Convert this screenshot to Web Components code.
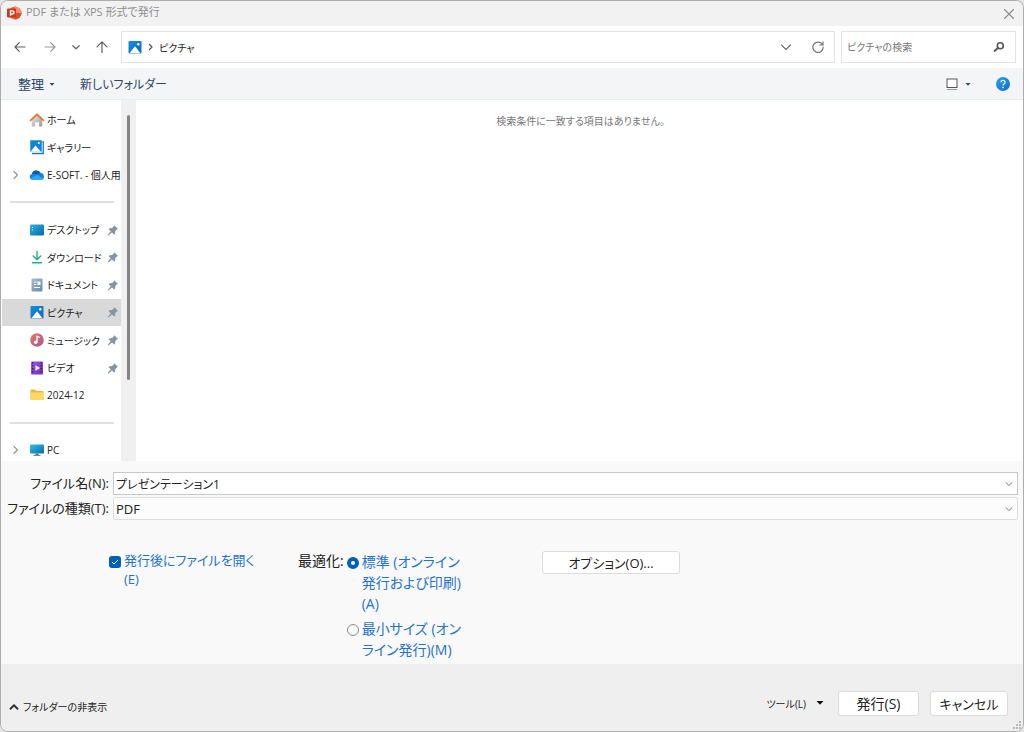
<!DOCTYPE html>
<html lang="ja">
<head>
<meta charset="utf-8">
<title>PDF または XPS 形式で発行</title>
<style>
html, body { height: 100%; margin: 0; }
body { background: #e4e4e4; font-family: "Open Sans", "Noto Sans CJK JP", sans-serif; font-feature-settings: "palt"; color: #222; }
</style>
</head>
<body>
<publish-dialog></publish-dialog>
<script>
const BASE = `<style>
*{box-sizing:border-box}
button,input,select{font:inherit;font-feature-settings:inherit;color:inherit;margin:0}
button{border:0;background:none;padding:0;cursor:default;display:flex;align-items:center;justify-content:center;white-space:nowrap}
</style>`;
function define(name, html, setup) {
  customElements.define(name, class extends HTMLElement {
    connectedCallback() {
      if (this.shadowRoot) return;
      const t = document.createElement('template');
      t.innerHTML = BASE + (typeof html === 'function' ? html(this) : html);
      this.attachShadow({ mode: 'open' }).append(t.content.cloneNode(true));
      if (setup) setup(this);
    }
  });
}
const line = (d, c = '#666', w = 1.2) => `<path d="${d}" fill="none" stroke="${c}" stroke-width="${w}" stroke-linecap="round" stroke-linejoin="round"/>`;
const grad = (id, a, b) => `<defs><linearGradient id="${id}" x1="0" y1="0" x2="1" y2="1"><stop stop-color="${a}"/><stop offset="1" stop-color="${b}"/></linearGradient></defs>`;
const ICONS = {
  ppt: '<circle cx="8" cy="7" r="6.500" fill="#ed6c47"/><path d="M8 .5a6.500 6.500 0 0 1 6.500 6.500H8z" fill="#ff8f6b"/><path d="M8 13.500A6.500 6.500 0 0 0 14.500 7H8z" fill="#d35230"/><rect x="0" y="2.500" width="9" height="9" rx="1" fill="#c43e1c"/><path d="M3.500 9.800V4.800h1.900a1.600 1.600 0 0 1 0 3.200H3.500" fill="none" stroke="#fff" stroke-width="1.300"/>',
  close: line('M3.500 3.500l9 9M12.500 3.500l-9 9', '#8a8a8a', 1.1),
  back: line('M13 8H3M7.300 3.700L3 8l4.300 4.300', '#606060'),
  forward: line('M3 8h10M8.700 3.700L13 8l-4.300 4.300', '#9a9a9a'),
  up: line('M8 13.500V3M3 7.800L8 2.800l5 5', '#606060'),
  chevron: line('M4.800 6.700L8 9.800l3.200-3.100', '#666', 1.3),
  wide: line('M3.500 6L8 10.500 12.500 6', '#777'),
  small: line('M5 6.700L8 9.500l3-2.800', '#777', 1),
  crumb: line('M6.500 5.500L9 8l-2.500 2.500', '#555', 1.3),
  expand: line('M6 4.500L9.500 8 6 11.500', '#999', 1.3),
  fold: line('M4.500 9.700L8 6.300l3.500 3.400', '#333', 2),
  refresh: line('M12.700 6A5.200 5.200 0 1 0 13.200 8M13 2.800V6H9.800', '#777', 1.2),
  search: '<circle cx="9.300" cy="6.700" r="3" fill="none" stroke="#555" stroke-width="1.600"/>' + line('M7 9L3.500 12', '#555', 1.8),
  triangle: '<path d="M5.500 7h5L8 9.800z" fill="currentColor"/>',
  bigtri: '<path d="M4.500 6h7L8 9.800z" fill="#111"/>',
  view: '<rect x="3" y="3" width="10" height="8.500" fill="#fff" stroke="#555"/><path d="M3 13.500h10" stroke="#999"/>',
  help: grad('g', '#2ba0e8', '#0b6fd0') + '<circle cx="8" cy="8" r="7" fill="url(#g)"/><path d="M5.900 6.300a2.100 2 0 1 1 3 1.800c-.7.400-.9.700-.9 1.500" fill="none" stroke="#fff" stroke-width="1.200"/><circle cx="8" cy="11.600" r=".8" fill="#fff"/>',
  home: grad('g', '#e8e8e8', '#9b9b9b') + '<path d="M2.800 7.500L8 3l5.200 4.500V14.500H9.900v-4.300H6.100v4.300H2.800z" fill="url(#g)"/>' + line('M1.600 8.300L8 2.300l6.400 6', '#e8742c', 1.8),
  gallery: '<path d="M4 3h10.200v11.500H3" fill="none" stroke="#1875c6" stroke-width="1.400"/><rect x="1" y="1" width="12" height="12" fill="#1284d8" stroke="#fff" stroke-width=".5"/><path d="M1.500 12.800L6.500 6.500l5.500 6.300z" fill="#fff"/><circle cx="9.800" cy="4" r="1.100" fill="#fff"/>',
  cloud: '<path d="M3.500 12.800a3 3 0 0 1-.6-5.900A4.700 4.700 0 0 1 11.600 6a3.500 3.500 0 0 1 1 6.800z" fill="#1684dc"/><path d="M2.900 6.900A4.700 4.700 0 0 1 11.600 6c-2 .1-2.600 1.200-3.600 1.700-1.600-1-3.300-1.200-5.100-.8z" fill="#0f5cad"/><path d="M8 7.700l6.500 4.100c-.5.600-1.100 1-1.900 1h-9.100c-1 0-1.900-.6-2.400-1.400z" fill="#2da8ef"/>',
  desktop: grad('g', '#29b5dc', '#0b69a8') + '<rect x="1" y="2.500" width="14" height="11" rx="1" fill="url(#g)"/><path d="M3 5.500h1M3 8h1" stroke="#d6f6ff"/>',
  download: line('M8 2.500v8M4.300 7L8 10.700 11.700 7M3.500 13.700h9', '#23b08b', 1.4),
  document: grad('g', '#a5bdd5', '#6689ad') + '<rect x="2.500" y="1.500" width="11" height="13" rx="1" fill="url(#g)"/><path d="M5 5h2.500M5 7.500h2.500M5 10.500h6" stroke="#fff"/><rect x="8.500" y="4.500" width="3" height="3.500" fill="#fff"/>',
  picture: grad('g', '#0d91df', '#1268ba') + '<rect x="1.500" y="2" width="13" height="12.500" rx="1" fill="url(#g)"/><path d="M2.500 14.300L7.600 7.700q.4-.4.800 0l5.100 6.600z" fill="#fff"/><circle cx="11.300" cy="5.300" r="1.200" fill="#fff"/>',
  music: grad('g', '#e8745b', '#a45c94') + '<circle cx="8" cy="8" r="6.800" fill="url(#g)"/><path d="M8 10V4.200l3 1.300" fill="none" stroke="#fff" stroke-width="1.300"/><circle cx="6.700" cy="10.300" r="1.800" fill="#fff"/>',
  video: grad('g', '#9857ea', '#6f2fc4') + '<rect x="2" y="1.500" width="12" height="13" rx="1" fill="url(#g)"/><path d="M3.800 2v12M12.200 2v12" stroke="#3b177a" stroke-width="1.300" stroke-dasharray="1.500 1.500"/><path d="M6.500 5.200v5.600L11 8z" fill="#fff"/>',
  folder: '<path d="M1.500 3.500q0-1 1-1H6l1.500 1.500h6q1 0 1 1V12q0 1-1 1h-11q-1 0-1-1z" fill="#f2b632"/><path d="M1.500 5.500h13V12q0 1-1 1h-11q-1 0-1-1z" fill="#ffd867"/>',
  pc: grad('g', '#2fc2e4', '#1169a5') + '<rect x="1" y="2.500" width="14" height="9" rx=".8" fill="url(#g)"/><path d="M6.500 11.500h3l.5 2H6z" fill="#3b85b0"/><path d="M4.500 13.500h7" stroke="#6c8ba0"/>',
  pin: '<path d="M9.300 3.200L13 6.900l-1.200.6-1.500 1.600-.2 2.600-1 .9L7 10.500l-3.300 2.800-.9.200.2-.9L5.800 9.300 3.600 7.200l1-1 2.500-.3 1.600-1.500z" fill="#87939e"/>',
  grip: '<path d="M12 6h2v2h-2zM9 9h2v2H9zM12 9h2v2h-2zM6 12h2v2H6zM9 12h2v2H9zM12 12h2v2h-2z" fill="#b8b8b8"/>'
};
define('ui-icon', el => `<style>:host{display:block;flex:none;width:16px;height:16px}svg{display:block;width:100%;height:100%}</style>
<svg viewBox="0 0 16 16" aria-hidden="true">${ICONS[el.getAttribute('name')]}</svg>`);

define('title-bar', `<style>
:host{display:flex;align-items:center;height:25px;padding:0 6px;background:#f2f2f2;color:#8f8f8f;font-size:11px;flex:none}
h1{font:inherit;margin:0 auto 0 3px;white-space:nowrap;line-height:22px;align-self:flex-start}
</style><ui-icon name="ppt"></ui-icon><h1><slot></slot></h1><button aria-label="閉じる"><ui-icon name="close"></ui-icon></button>`);

define('address-bar', `<style>
:host{display:flex;align-items:center;height:42px;padding:0 7px 0 11px;background:#fff;flex:none;font-size:10px}
nav{display:flex;gap:10px;margin-right:11px}
.forward{margin-left:4px}
.box{display:flex;align-items:center;height:32px;border:1px solid #e3e3e3;background:#fff}
.path{flex:1;padding:0 8px 0 5px;margin-right:6px}
.path span{margin-right:auto}
.path button:last-child{margin-left:16px}
.find{width:175px;padding:0 8px 0 5px}
input{flex:1;min-width:0;border:0;outline:0;padding:0;background:none}
input::placeholder{color:#777;opacity:1}
</style>
<nav aria-label="移動"><button aria-label="戻る"><ui-icon name="back"></ui-icon></button><button class="forward" aria-label="進む"><ui-icon name="forward"></ui-icon></button><button aria-label="履歴"><ui-icon name="chevron"></ui-icon></button><button aria-label="上へ"><ui-icon name="up"></ui-icon></button></nav>
<div class="box path"><ui-icon name="picture"></ui-icon><ui-icon name="crumb"></ui-icon><span>ピクチャ</span><button aria-label="以前の場所"><ui-icon name="wide"></ui-icon></button><button aria-label="更新"><ui-icon name="refresh"></ui-icon></button></div>
<div class="box find"><input type="search" placeholder="ピクチャの検索" aria-label="ピクチャの検索"><button aria-label="検索"><ui-icon name="search"></ui-icon></button></div>`);

define('command-bar', `<style>
:host{display:flex;align-items:center;height:32px;padding:0 12px 0 17px;background:#f4f5f7;border-bottom:1px solid #ebecee;color:#2c4569;font-size:13px;flex:none}
.new{margin:0 auto 0 20px;font-size:12px}
.view{margin-right:19px}
</style>
<button>整理<ui-icon name="triangle"></ui-icon></button><button class="new">新しいフォルダー</button>
<button class="view" aria-label="表示"><ui-icon name="view"></ui-icon><ui-icon name="triangle"></ui-icon></button><button aria-label="ヘルプ"><ui-icon name="help"></ui-icon></button>`);

define('nav-item', el => `<style>
:host{display:flex;flex:1;min-height:0;margin-left:1px}
a{display:flex;flex:1;min-width:0;align-items:center;padding-left:6px;color:inherit;text-decoration:none;white-space:nowrap;overflow:hidden}
:host([selected]) a{background:#d9d9d9}
.exp{width:16px;margin-right:5px}
.text{flex:1;min-width:0;overflow:hidden;margin-left:2px}
</style>
<a href="#"><span class="exp">${el.hasAttribute('expandable') ? '<ui-icon name="expand"></ui-icon>' : ''}</span><ui-icon name="${el.getAttribute('icon')}"></ui-icon><span class="text"><slot></slot></span>${el.hasAttribute('pinned') ? '<ui-icon name="pin"></ui-icon>' : ''}</a>`);

define('nav-pane', `<style>
:host{display:flex;width:135px;flex:none;background:#fff;overflow:hidden;font-size:10px}
nav{display:flex;flex-direction:column;flex:1;min-width:0;margin:6px 0 -3px}
.sep{flex:1;display:flex;align-items:center;padding:0 7px 0 9px}
hr{flex:1;border:0;border-top:2px solid #e0e0e0;margin:0}
.track{width:15px;background:#f0f0f0;padding:15px 6px 81px 6px;display:flex}
.thumb{flex:1;background:#858585;border-radius:2px}
</style>
<nav aria-label="フォルダー">
<nav-item icon="home">ホーム</nav-item><nav-item icon="gallery">ギャラリー</nav-item><nav-item icon="cloud" expandable>E-SOFT. - 個人用</nav-item>
<div class="sep"><hr></div>
<nav-item icon="desktop" pinned>デスクトップ</nav-item><nav-item icon="download" pinned>ダウンロード</nav-item><nav-item icon="document" pinned>ドキュメント</nav-item><nav-item icon="picture" pinned selected>ピクチャ</nav-item><nav-item icon="music" pinned>ミュージック</nav-item><nav-item icon="video" pinned>ビデオ</nav-item><nav-item icon="folder">2024-12</nav-item>
<div class="sep"><hr></div>
<nav-item icon="pc" expandable>PC</nav-item>
</nav><div class="track"><div class="thumb"></div></div>`);

define('file-list', `<style>
:host{display:block;flex:1;background:#fff;padding:12px 0 0 2px;text-align:center;font-size:10px;line-height:18px;color:#777}
p{margin:0}</style><p><slot></slot></p>`);

define('file-fields', `<style>
:host{display:grid;grid-template-columns:108px 1fr;column-gap:4px;row-gap:2px;padding:11px 5px 0 0;font-size:13px}
label{text-align:right;line-height:23px;white-space:nowrap}
.field{display:grid;grid-template-columns:1fr 16px;align-items:center;height:23px;background:#fff;border:1px solid #c8c8c8}
.type{background:#fcfcfc;border-color:#dedede;border-radius:2px}
input,select{grid-area:1/1/2/3;width:100%;height:21px;border:0;padding:0 16px 0 2px;background:none;outline:0;appearance:none;line-height:20px}
input{font-size:12px}
ui-icon{grid-area:1/2/2/3;pointer-events:none}
</style>
<label for="name">ファイル名(N):</label><div class="field"><input id="name" value="プレゼンテーション1"><ui-icon name="small"></ui-icon></div>
<label for="type">ファイルの種類(T):</label><div class="field type"><select id="type"><option>PDF</option></select><ui-icon name="small"></ui-icon></div>`);

define('choice-box', el => {
  const type = el.getAttribute('type');
  return `<style>
:host{display:block;color:#1f72cf}
label{display:flex;align-items:flex-start;gap:3px;white-space:nowrap}
input{appearance:none;flex:none;width:12px;height:12px;margin:5px 0 0;border:1px solid #8c8c8c;background:#fafafa}
input[type=radio]{border-radius:50%;margin-top:6px}
input[type=radio]:checked{border:4px solid #005fb8;background:#fff}
input[type=checkbox]{border-radius:3px}
input[type=checkbox]:checked{border:0;background:#005fb8 url("data:image/svg+xml,%3Csvg xmlns='http://www.w3.org/2000/svg' viewBox='0 0 12 12'%3E%3Cpath d='M3 6l2 2 4-4' fill='none' stroke='white'/%3E%3C/svg%3E")}
</style><label><input type="${type}" ${el.hasAttribute('checked') ? 'checked' : ''}><span><slot></slot></span></label>`;
});

define('publish-options', `<style>
:host{display:grid;grid-template-columns:189px 244px 138px;align-items:start;padding:31px 0 0 108px;font-size:13px}
.open{line-height:19px}
.opt{display:flex;gap:3px;font-size:14px;line-height:21px;white-space:nowrap;margin-top:-1px}
.list{display:flex;flex-direction:column;gap:4px;margin-top:1px}
button{height:23px;background:#fff;border:1px solid #dcdcdc;border-radius:3px}
</style>
<choice-box class="open" type="checkbox" checked>発行後にファイルを開く<br>(E)</choice-box>
<div class="opt" role="radiogroup" aria-labelledby="opt"><span id="opt">最適化:</span><div class="list"><choice-box type="radio" checked>標準 (オンライン<br>発行および印刷)<br>(A)</choice-box><choice-box type="radio">最小サイズ (オン<br>ライン発行)(M)</choice-box></div></div>
<button>オプション(O)...</button>`, el => {
  const boxes = [...el.shadowRoot.querySelectorAll('choice-box[type=radio]')];
  boxes.forEach(b => b.addEventListener('click', () => boxes.forEach(o => {
    o.shadowRoot.querySelector('input').checked = o === b;
  })));
});

define('dialog-footer', `<style>
:host{display:flex;align-items:center;height:67px;background:#efefef;padding:11px 15px 0 5px;font-size:10px;position:relative;flex:none}
.fold{margin:7px auto 0 0;gap:1px}
.tools{gap:6px;margin-right:10px}
.main{height:25px;width:81px;background:#fff;border:1px solid #dcdcdc;border-radius:3px;font-size:14px}
.main + .main{margin-left:11px;width:78px;font-size:13px}
.grip{position:absolute;right:0;bottom:0}
</style>
<button class="fold"><ui-icon name="fold"></ui-icon>フォルダーの非表示</button>
<button class="tools">ツール(L)<ui-icon name="bigtri"></ui-icon></button>
<button class="main">発行(S)</button><button class="main">キャンセル</button><ui-icon class="grip" name="grip"></ui-icon>`);

define('publish-dialog', `<style>
:host{display:flex;flex-direction:column;min-height:100%;box-sizing:border-box;border:1px solid #adadad;border-radius:8px;overflow:hidden;background:#f9f9f9}
main{display:flex;flex:1}
section{min-height:203px;flex:none}
</style>
<title-bar>PDF または XPS 形式で発行</title-bar><address-bar></address-bar><command-bar></command-bar>
<main><nav-pane></nav-pane><file-list>検索条件に一致する項目はありません。</file-list></main>
<section><file-fields></file-fields><publish-options></publish-options></section>
<dialog-footer></dialog-footer>`);
</script>
</body>
</html>
